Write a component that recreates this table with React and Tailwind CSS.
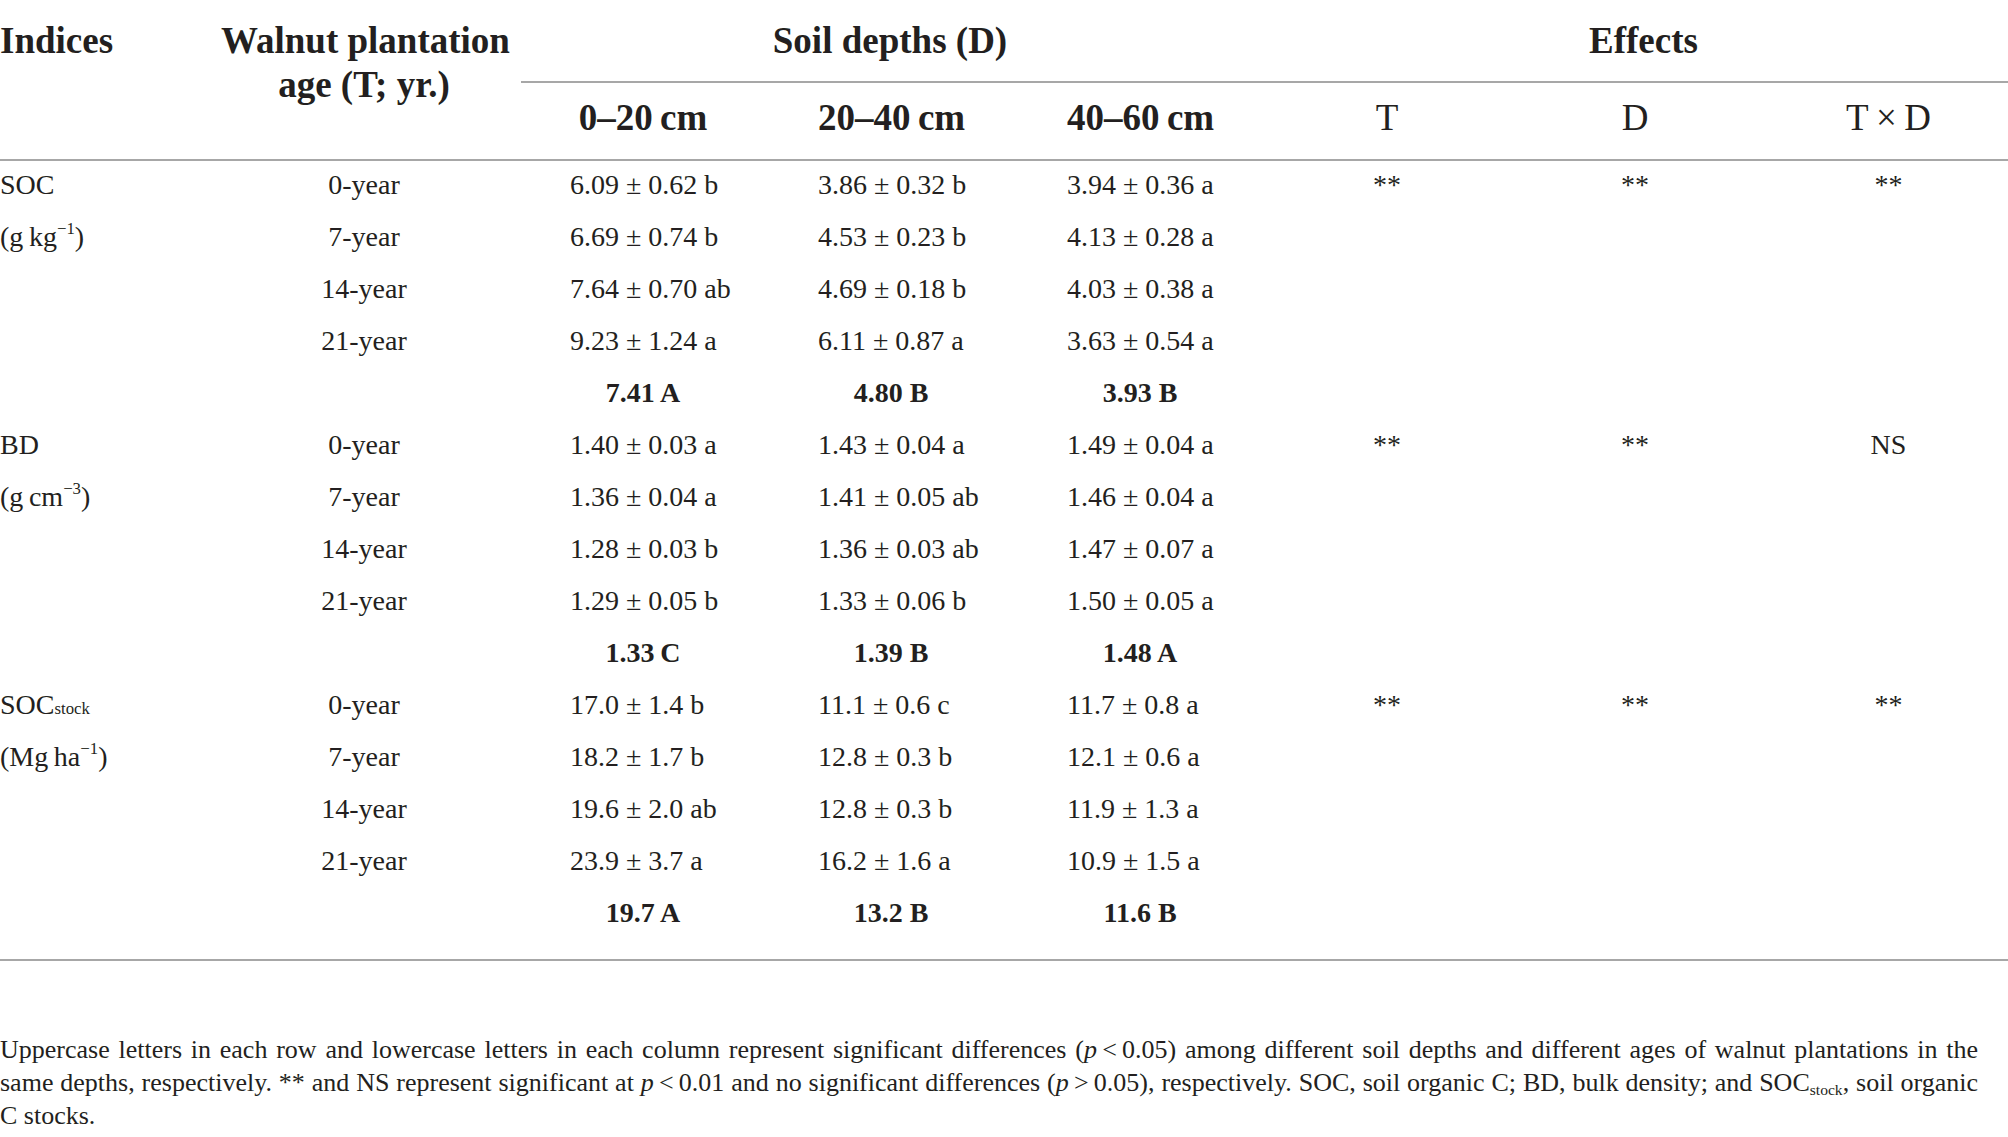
const groups = [
  {
    label: 'SOC',
    unit: (
      <>
        (g{'\u2009'}kg<sup className="text-[0.6em]">−1</sup>)
      </>
    ),
    rows: [
      ['0-year', '6.09 ± 0.62 b', '3.86 ± 0.32 b', '3.94 ± 0.36 a'],
      ['7-year', '6.69 ± 0.74 b', '4.53 ± 0.23 b', '4.13 ± 0.28 a'],
      ['14-year', '7.64 ± 0.70 ab', '4.69 ± 0.18 b', '4.03 ± 0.38 a'],
      ['21-year', '9.23 ± 1.24 a', '6.11 ± 0.87 a', '3.63 ± 0.54 a'],
    ],
    mean: ['7.41 A', '4.80 B', '3.93 B'],
    effects: ['**', '**', '**'],
  },
  {
    label: 'BD',
    unit: (
      <>
        (g{'\u2009'}cm<sup className="text-[0.6em]">−3</sup>)
      </>
    ),
    rows: [
      ['0-year', '1.40 ± 0.03 a', '1.43 ± 0.04 a', '1.49 ± 0.04 a'],
      ['7-year', '1.36 ± 0.04 a', '1.41 ± 0.05 ab', '1.46 ± 0.04 a'],
      ['14-year', '1.28 ± 0.03 b', '1.36 ± 0.03 ab', '1.47 ± 0.07 a'],
      ['21-year', '1.29 ± 0.05 b', '1.33 ± 0.06 b', '1.50 ± 0.05 a'],
    ],
    mean: ['1.33\u2009C', '1.39 B', '1.48 A'],
    effects: ['**', '**', 'NS'],
  },
  {
    label: (
      <>
        SOC<sub className="text-[0.6em]">stock</sub>
      </>
    ),
    unit: (
      <>
        (Mg{'\u2009'}ha<sup className="text-[0.6em]">−1</sup>)
      </>
    ),
    rows: [
      ['0-year', '17.0 ± 1.4 b', '11.1 ± 0.6 c', '11.7 ± 0.8 a'],
      ['7-year', '18.2 ± 1.7 b', '12.8 ± 0.3 b', '12.1 ± 0.6 a'],
      ['14-year', '19.6 ± 2.0 ab', '12.8 ± 0.3 b', '11.9 ± 1.3 a'],
      ['21-year', '23.9 ± 3.7 a', '16.2 ± 1.6 a', '10.9 ± 1.5 a'],
    ],
    mean: ['19.7 A', '13.2 B', '11.6 B'],
    effects: ['**', '**', '**'],
  },
];

const cols = 'grid grid-cols-[221px_300px_248px_249px_241px_256px_240px_253px]';
const cell = 'flex h-[52px] items-center pb-[4px]';

function DataCell({ children, bold }) {
  return (
    <div className={`${cell} pl-[49px]`}>
      <div className={`w-[146px] whitespace-nowrap ${bold ? 'text-center font-bold' : 'text-left'}`}>{children}</div>
    </div>
  );
}

function EffectCell({ children, extra = '' }) {
  return <div className={`${cell} justify-center ${extra}`}>{children}</div>;
}

function Group({ group }) {
  const lines = [...group.rows, ['', ...group.mean]];
  return lines.map((row, i) => (
    <div key={i} className={cols}>
      <div className={`${cell} whitespace-nowrap`}>{i === 0 ? group.label : i === 1 ? group.unit : ''}</div>
      <div className={`${cell} justify-center pr-[14px]`}>{row[0]}</div>
      <DataCell bold={i === 4}>{row[1]}</DataCell>
      <DataCell bold={i === 4}>{row[2]}</DataCell>
      <DataCell bold={i === 4}>{row[3]}</DataCell>
      <EffectCell>{i === 0 ? group.effects[0] : ''}</EffectCell>
      <EffectCell>{i === 0 ? group.effects[1] : ''}</EffectCell>
      <EffectCell extra="pl-[14px]">{i === 0 ? group.effects[2] : ''}</EffectCell>
    </div>
  ));
}

export default function App() {
  return (
    <div className="min-h-screen w-[2008px] bg-white font-['Liberation_Serif',serif] text-[28px] text-[#231f20]">
      <div className={`${cols} grid-rows-[81px_2px_76px] text-[37px] font-bold`}>
        <div className="row-span-3 pt-[19px] leading-[44px]">Indices</div>
        <div className="row-span-3 pr-[14px] pt-[19px] text-center leading-[44px] whitespace-nowrap">
          Walnut plantation
          <br />
          age (T; yr.)
        </div>
        <div className="col-span-3 flex items-center justify-center">Soil depths (D)</div>
        <div className="col-span-3 flex items-center justify-center pl-[20px]">Effects</div>
        <div className="col-span-6 bg-[#a7a7a7]" />
        <div className="flex items-center pb-[6px] pl-[49px]">
          <div className="w-[146px] text-center whitespace-nowrap">0–20{'\u2009'}cm</div>
        </div>
        <div className="flex items-center pb-[6px] pl-[49px]">
          <div className="w-[146px] text-center whitespace-nowrap">20–40{'\u2009'}cm</div>
        </div>
        <div className="flex items-center pb-[6px] pl-[49px]">
          <div className="w-[146px] text-center whitespace-nowrap">40–60{'\u2009'}cm</div>
        </div>
        <div className="flex items-center justify-center pb-[6px] font-normal">T</div>
        <div className="flex items-center justify-center pb-[6px] font-normal">D</div>
        <div className="flex items-center justify-center pb-[6px] pl-[14px] font-normal">T{'\u2009'}×{'\u2009'}D</div>
      </div>
      <div className="h-[2px] bg-[#a7a7a7]" />

      <div className="pb-[18px]">
        {groups.map((g, i) => (
          <Group key={i} group={g} />
        ))}
      </div>
      <div className="h-[2px] bg-[#a7a7a7]" />

      <div className="mt-[72px] w-[1978px] text-[26px] leading-[33px]">
        <div className="text-justify [text-align-last:justify]">
          Uppercase letters in each row and lowercase letters in each column represent significant differences (
          <i>p</i>
          {'\u2009'}&lt;{'\u2009'}0.05) among different soil depths and different ages of walnut plantations in the
        </div>
        <div className="text-justify [text-align-last:justify]">
          same depths, respectively. ** and NS represent significant at <i>p</i>
          {'\u2009'}&lt;{'\u2009'}0.01 and no significant differences (<i>p</i>
          {'\u2009'}&gt;{'\u2009'}0.05), respectively. SOC, soil organic C; BD, bulk density; and SOC
          <sub className="text-[0.6em]">stock</sub>, soil organic
        </div>
        <div>C stocks.</div>
      </div>
    </div>
  );
}
